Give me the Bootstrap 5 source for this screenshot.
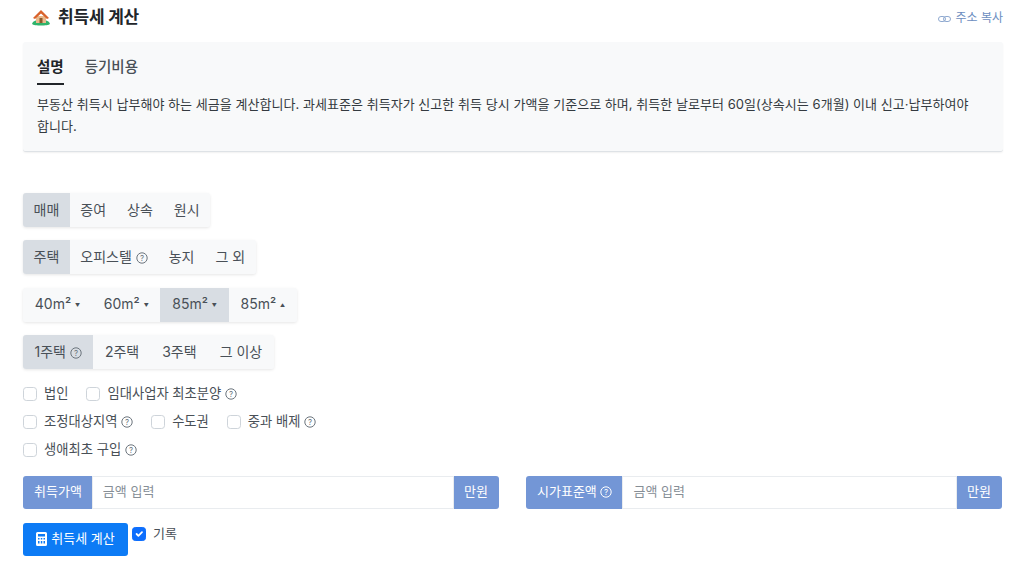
<!DOCTYPE html>
<html lang="ko">
<head>
  <meta charset="UTF-8" />
  <title>취득세 계산</title>
  <link href="https://cdn.jsdelivr.net/npm/bootstrap@5.3.0/dist/css/bootstrap.min.css" rel="stylesheet">
  <style>
    body {
      font-family: Inter, 'Noto Sans CJK KR', sans-serif;
      font-size: 13px;
      color: #343a40;
      background: #fff;
      overflow: hidden;
    }
    .calc-page { padding: 0 21px 0 23px; }
    .calc-head { height: 42px; padding: 7px 0 0 9px; }
    .calc-title { font-size: 17px; font-weight: 700; color: #212529; letter-spacing: -0.2px; margin: 0; }
    .copy-link { font-size: 12px; color: #6c8ebf; text-decoration: none; margin-top: 2px; }
    .info-box {
      background: #f8f9fa;
      border-bottom: 1px solid #dee2e6;
      box-shadow: 0 1px 2px rgba(0,0,0,.06);
      border-radius: 3px;
      height: 110px;
      padding: 12px 14px;
      margin-bottom: 41px;
    }
    .info-tabs { gap: 21px; height: 31px; }
    .info-tab { font-size: 14.5px; font-weight: 500; color: #495057; text-decoration: none; height: 31px; line-height: 26px; }
    .info-tab.on { color: #212529; font-weight: 700; border-bottom: 2px solid #212529; }
    .info-text { margin: 8px 0 0; line-height: 22px; font-size: 13px; letter-spacing: .04px; word-break: keep-all; color: #343a40; }
    .opt-group { display: flex; width: fit-content; margin-bottom: 13.4px; box-shadow: 0 1px 3px rgba(0,0,0,.1); border-radius: 3px; background: #f8f9fa; }
    .opt-group .btn {
      font-size: 14px;
      color: #495057;
      background: #f8f9fa;
      border: 0;
      border-radius: 0;
      height: 34px;
      padding: 0 10.5px;
      line-height: 30px;
      white-space: nowrap;
    }
    .opt-group.opt-house .btn { padding: 0 11.5px; }
    .opt-group.opt-area .btn { padding: 0 11.8px; }
    .opt-group .btn.on { background: #d8dde3; }
    .opt-group .btn:first-child { border-radius: 3px 0 0 3px; }
    .opt-group .btn:last-child { border-radius: 0 3px 3px 0; }
    .qmark { vertical-align: -2px; }
    .arrow-mark { font-size: 5px; vertical-align: 2px; }
    .chk-rows { margin-top: -3px; }
    .chk-row { height: 28px; gap: 18px; }
    .chk-item { display: flex; align-items: center; gap: 7px; font-size: 13.3px; color: #495057; margin: 0; }
    .chk-box { width: 14px; height: 14px; margin: 0; border: 1px solid #ced4da; border-radius: 3px; }
    .amount-row { gap: 27px; margin: 12px 1px 14px 0; }
    .amount-group { flex: 1; height: 33px; }
    .amount-group .input-group-text {
      background: #7396d6;
      color: #fff;
      border: 0;
      border-radius: 3px;
      font-size: 13px;
      padding: 0 11px;
    }
    .amount-group .form-control { font-size: 13px; border-color: #e9ecef; padding: 0 10px; box-shadow: none; }
    .amount-group .form-control::placeholder { color: #868e96; }
    .calc-btn { background: #0d7bf5; border: 0; font-size: 13px; height: 33px; width: 105px; padding: 0; border-radius: 3px; }
    .rec-check { gap: 7px; font-size: 13px; color: #495057; height: 22px; margin-left: 4px; }
    .rec-box { width: 14px; height: 14px; margin: 0; border-radius: 3px; }
  </style>
</head>
<body>
<div class="calc-page">

  <!-- Header -->
  <div class="calc-head d-flex justify-content-between">
    <div class="d-flex align-items-center gap-2 align-self-start">
      <svg width="18" height="17" viewBox="0 0 18 17">
        <path d="M0 15c1-3 3-4 9-4s8 1 9 4c-2 2-16 2-18 0z" fill="#2fb36b"/>
        <path d="M4 7h10v7H4z" fill="#e9b98c"/>
        <path d="M1 9 9 1l8 8-2 1L9 4.500 3 10z" fill="#d9622b"/>
        <path d="M7.500 9h3v5h-3z" fill="#8a5a2b"/>
      </svg>
      <h1 class="calc-title">취득세 계산</h1>
    </div>
    <a class="copy-link d-flex align-items-start gap-1" href="#">
      <svg class="mt-1" width="13" height="12" viewBox="0 0 13 12" fill="none" stroke="#8fa9d0" stroke-width="1">
        <rect x="0.500" y="3.500" width="7" height="5" rx="2.500"/>
        <rect x="5.500" y="3.500" width="7" height="5" rx="2.500"/>
      </svg>
      주소 복사
    </a>
  </div>

  <!-- Description -->
  <div class="info-box">
    <div class="info-tabs d-flex">
      <a class="info-tab on" href="#">설명</a>
      <a class="info-tab" href="#">등기비용</a>
    </div>
    <p class="info-text">부동산 취득시 납부해야 하는 세금을 계산합니다. 과세표준은 취득자가 신고한 취득 당시 가액을 기준으로 하며, 취득한 날로부터 60일(상속시는 6개월) 이내 신고·납부하여야 합니다.</p>
  </div>

  <!-- Options -->
  <div class="opt-group">
    <button class="btn on">매매</button>
    <button class="btn">증여</button>
    <button class="btn">상속</button>
    <button class="btn">원시</button>
  </div>
  <div class="opt-group">
    <button class="btn on">주택</button>
    <button class="btn">오피스텔 <svg class="qmark" width="12" height="12" viewBox="0 0 12 12"><circle cx="6" cy="6" r="5.200" fill="none" stroke="#6c757d"/><text x="6" y="9" font-size="8" text-anchor="middle" fill="#6c757d">?</text></svg></button>
    <button class="btn">농지</button>
    <button class="btn">그 외</button>
  </div>
  <div class="opt-group opt-area">
    <button class="btn">40m² <span class="arrow-mark">▼</span></button>
    <button class="btn">60m² <span class="arrow-mark">▼</span></button>
    <button class="btn on">85m² <span class="arrow-mark">▼</span></button>
    <button class="btn">85m² <span class="arrow-mark">▲</span></button>
  </div>
  <div class="opt-group opt-house">
    <button class="btn on">1주택 <svg class="qmark" width="12" height="12" viewBox="0 0 12 12"><circle cx="6" cy="6" r="5.200" fill="none" stroke="#6c757d"/><text x="6" y="9" font-size="8" text-anchor="middle" fill="#6c757d">?</text></svg></button>
    <button class="btn">2주택</button>
    <button class="btn">3주택</button>
    <button class="btn">그 이상</button>
  </div>

  <!-- Checks -->
  <div class="chk-rows">
    <div class="chk-row d-flex align-items-center">
      <label class="chk-item"><input class="form-check-input chk-box" type="checkbox">법인</label>
      <label class="chk-item"><input class="form-check-input chk-box" type="checkbox"><span>임대사업자 최초분양 <svg class="qmark" width="12" height="12" viewBox="0 0 12 12"><circle cx="6" cy="6" r="5.200" fill="none" stroke="#6c757d"/><text x="6" y="9" font-size="8" text-anchor="middle" fill="#6c757d">?</text></svg></span></label>
    </div>
    <div class="chk-row d-flex align-items-center">
      <label class="chk-item"><input class="form-check-input chk-box" type="checkbox"><span>조정대상지역 <svg class="qmark" width="12" height="12" viewBox="0 0 12 12"><circle cx="6" cy="6" r="5.200" fill="none" stroke="#6c757d"/><text x="6" y="9" font-size="8" text-anchor="middle" fill="#6c757d">?</text></svg></span></label>
      <label class="chk-item"><input class="form-check-input chk-box" type="checkbox">수도권</label>
      <label class="chk-item"><input class="form-check-input chk-box" type="checkbox"><span>중과 배제 <svg class="qmark" width="12" height="12" viewBox="0 0 12 12"><circle cx="6" cy="6" r="5.200" fill="none" stroke="#6c757d"/><text x="6" y="9" font-size="8" text-anchor="middle" fill="#6c757d">?</text></svg></span></label>
    </div>
    <div class="chk-row d-flex align-items-center">
      <label class="chk-item"><input class="form-check-input chk-box" type="checkbox"><span>생애최초 구입 <svg class="qmark" width="12" height="12" viewBox="0 0 12 12"><circle cx="6" cy="6" r="5.200" fill="none" stroke="#6c757d"/><text x="6" y="9" font-size="8" text-anchor="middle" fill="#6c757d">?</text></svg></span></label>
    </div>
  </div>

  <!-- Amounts -->
  <div class="amount-row d-flex">
    <div class="input-group amount-group">
      <span class="input-group-text">취득가액</span>
      <input class="form-control" type="text" placeholder="금액 입력">
      <span class="input-group-text">만원</span>
    </div>
    <div class="input-group amount-group">
      <span class="input-group-text">시가표준액&nbsp;<svg width="12" height="12" viewBox="0 0 12 12"><circle cx="6" cy="6" r="5.200" fill="none" stroke="#fff"/><text x="6" y="9" font-size="8" text-anchor="middle" fill="#fff">?</text></svg></span>
      <input class="form-control" type="text" placeholder="금액 입력">
      <span class="input-group-text">만원</span>
    </div>
  </div>

  <div class="d-flex align-items-start">
    <button class="btn btn-primary calc-btn d-flex align-items-center justify-content-center gap-1">
      <svg width="11" height="14" viewBox="0 0 11 14"><path fill="#fff" fill-rule="evenodd" d="M1.500 0h8A1.500 1.500 0 0 1 11 1.500v11A1.500 1.500 0 0 1 9.500 14h-8A1.500 1.500 0 0 1 0 12.500v-11A1.500 1.500 0 0 1 1.500 0zM2 2v2.500h7V2zm0 4v1.500h1.500V6zm2.800 0v1.500h1.500V6zm2.700 0v1.500H9V6zM2 9v2.500h1.500V9zm2.800 0v2.500h1.500V9zm2.700 0v2.500H9V9z"/></svg>
      취득세 계산
    </button>
    <label class="rec-check d-flex align-items-center"><input class="form-check-input rec-box" type="checkbox" checked>기록</label>
  </div>
</div>
<script src="https://cdn.jsdelivr.net/npm/bootstrap@5.3.0/dist/js/bootstrap.bundle.min.js"></script>
</body>
</html>
